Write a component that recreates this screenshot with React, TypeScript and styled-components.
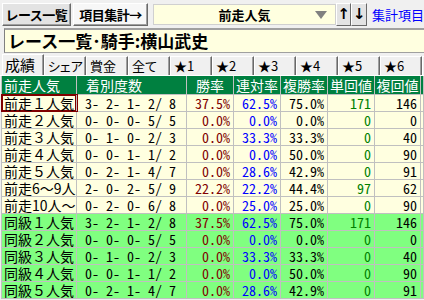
import React from "react";
import styled, { createGlobalStyle } from "styled-components";

const GlobalStyle = createGlobalStyle`
  html, body {
    margin: 0;
    padding: 0;
    background: #f0f0f0;
    overflow: hidden;
  }
  body {
    font-family: "Noto Sans CJK JP", sans-serif;
  }
`;

const Page = styled.div`
  width: 424px;
  height: 300px;
  overflow: hidden;
  background: #f0f0f0;
`;

// top tool bar
const TopBar = styled.div`
  display: flex;
  align-items: center;
  height: 28px;
  padding-left: 2px;
  white-space: nowrap;
  overflow: hidden;
`;

const ToolButton = styled.button<{ $width: number; $light?: boolean }>`
  width: ${(p) => p.$width}px;
  height: 23px;
  margin: 0 2px 0 0;
  padding: 0;
  font: bold 13px "Noto Sans CJK JP", sans-serif;
  letter-spacing: -0.5px;
  color: #000;
  background: ${(p) => (p.$light ? "#f7f7f7" : "#e3e3e3")};
  border: 1px solid;
  border-color: #ffffff #696969 #696969 #ffffff;
  box-shadow: inset -1px -1px 0 #a0a0a0;
`;

const Select = styled.div`
  position: relative;
  width: 189px;
  height: 21px;
  margin-left: 3px;
  box-sizing: border-box;
  background: #ffffe0;
  border: 1px solid #d0d0d0;
  font: bold 13px "Noto Sans CJK JP", sans-serif;
  line-height: 19px;
  text-align: center;
`;

const SelectArrow = styled.span`
  position: absolute;
  right: 8px;
  top: 6px;
  width: 0;
  height: 0;
  border-left: 6px solid transparent;
  border-right: 6px solid transparent;
  border-top: 8px solid #808080;
`;

const ArrowButton = styled.button`
  width: 16px;
  height: 23px;
  margin: 0;
  padding: 0;
  font: bold 15px "DejaVu Sans", sans-serif;
  line-height: 19px;
  background: #e3e3e3;
  border: 1px solid;
  border-color: #ffffff #696969 #696969 #ffffff;
  &:first-of-type {
    margin-left: 3px;
  }
`;

const LinkText = styled.span`
  margin-left: 5px;
  color: #0000ff;
  font-size: 13px;
`;

const TitleBox = styled.div`
  height: 25px;
  margin-left: 4px;
  box-sizing: border-box;
  background: #ffffe0;
  border-top: 2px solid #a0a0a0;
  border-left: 1px solid #808080;
  border-bottom: 1px solid #a0a0a0;
  padding-left: 3px;
  font: bold 17px "Noto Sans CJK JP", sans-serif;
  line-height: 21px;
  white-space: nowrap;
`;

// tab strip
const TabStrip = styled.div`
  display: flex;
  align-items: flex-end;
  height: 23px;
  padding-left: 2px;
  box-sizing: border-box;
  overflow: hidden;
  border-bottom: 1px solid #ffffff;
`;

const Tab = styled.div<{ $selected?: boolean }>`
  flex: none;
  width: 42px;
  height: ${(p) => (p.$selected ? 21 : 19)}px;
  box-sizing: border-box;
  border-top: 1px solid #ffffff;
  border-left: 1px solid #ffffff;
  border-right: 1px solid #696969;
  box-shadow: inset -1px 0 0 #a0a0a0;
  background: #f0f0f0;
  font-size: ${(p) => (p.$selected ? 15 : 13)}px;
  font-feature-settings: "palt";
  line-height: ${(p) => (p.$selected ? 19 : 17)}px;
  padding-left: ${(p) => (p.$selected ? 2 : 3)}px;
  white-space: nowrap;
  overflow: hidden;
`;

// result grid
const Table = styled.div`
  margin-left: 1px;
  border-left: 1px solid #c0c0c0;
  font-family: "Noto Sans CJK JP", sans-serif;
  font-size: 14px;
`;

const Row = styled.div<{ $bg: string; $header?: boolean }>`
  display: grid;
  grid-template-columns: 75px 110px 47px 47px 47px 47px 46px 1fr;
  height: ${(p) => (p.$header ? 19 : 17)}px;
  box-sizing: border-box;
  border-bottom: 1px solid #c0c0c0;
  background: ${(p) => p.$bg};
  color: ${(p) => (p.$header ? "#ffffff" : "#000000")};
  line-height: ${(p) => (p.$header ? 18 : 16)}px;
`;

const Cell = styled.div<{ $align?: string; $color?: string; $pad?: number; $mark?: boolean; $num?: boolean }>`
  position: relative;
  border-right: 1px solid #c0c0c0;
  box-sizing: border-box;
  white-space: pre;
  font-feature-settings: ${(p) => (p.$num ? '"hwid"' : "normal")};
  text-align: ${(p) => p.$align || "left"};
  color: ${(p) => p.$color || "inherit"};
  padding: ${(p) => (p.$align === "right" ? `0 ${p.$pad ?? 3}px 0 0` : `0 0 0 ${p.$pad ?? 2}px`)};
  box-shadow: ${(p) => (p.$mark ? "inset 0 0 0 1px #800000" : "none")};
  outline: ${(p) => (p.$mark ? "1px solid #800000" : "none")};
  overflow: ${(p) => (p.$mark ? "visible" : "hidden")};
`;

const HeadCell = styled.div<{ $center?: boolean; $pad?: number }>`
  border-right: 1px solid #c0c0c0;
  box-sizing: border-box;
  overflow: hidden;
  white-space: nowrap;
  text-align: ${(p) => (p.$center ? "center" : "left")};
  padding-left: ${(p) => p.$pad ?? 0}px;
`;

type Line = [string, string, string, string, string, string, string];

const rows: Line[] = [
  ["前走１人気", "3- 2- 1- 2/ 8", "37.5%", "62.5%", "75.0%", "171", "146"],
  ["前走２人気", "0- 0- 0- 5/ 5", "0.0%", "0.0%", "0.0%", "0", "0"],
  ["前走３人気", "0- 1- 0- 2/ 3", "0.0%", "33.3%", "33.3%", "0", "40"],
  ["前走４人気", "0- 0- 1- 1/ 2", "0.0%", "0.0%", "50.0%", "0", "90"],
  ["前走５人気", "0- 2- 1- 4/ 7", "0.0%", "28.6%", "42.9%", "0", "91"],
  ["前走6～9人", "2- 0- 2- 5/ 9", "22.2%", "22.2%", "44.4%", "97", "62"],
  ["前走10人～", "0- 2- 0- 6/ 8", "0.0%", "25.0%", "25.0%", "0", "90"],
  ["同級１人気", "3- 2- 1- 2/ 8", "37.5%", "62.5%", "75.0%", "171", "146"],
  ["同級２人気", "0- 0- 0- 5/ 5", "0.0%", "0.0%", "0.0%", "0", "0"],
  ["同級３人気", "0- 1- 0- 2/ 3", "0.0%", "33.3%", "33.3%", "0", "40"],
  ["同級４人気", "0- 0- 1- 1/ 2", "0.0%", "0.0%", "50.0%", "0", "90"],
  ["同級５人気", "0- 2- 1- 4/ 7", "0.0%", "28.6%", "42.9%", "0", "91"],
];

const tabs = ["成績", "シェア", "賞金", "全て", "★1", "★2", "★3", "★4", "★5", "★6", "★7"];

export default function App() {
  return (
    <Page>
      <GlobalStyle />
      <TopBar>
        <ToolButton $width={71}>レース一覧</ToolButton>
        <ToolButton $width={78} $light>項目集計→</ToolButton>
        <Select>
          前走人気
          <SelectArrow />
        </Select>
        <ArrowButton>↑</ArrowButton>
        <ArrowButton>↓</ArrowButton>
        <LinkText>集計項目</LinkText>
      </TopBar>
      <TitleBox>レース一覧･騎手:横山武史</TitleBox>
      <TabStrip>
        {tabs.map((t, i) => (
          <Tab key={t} $selected={i === 0}>
            {t}
          </Tab>
        ))}
      </TabStrip>
      <Table>
        <Row $bg="#008040" $header>
          <HeadCell $pad={2}>前走人気</HeadCell>
          <HeadCell $pad={9}>着別度数</HeadCell>
          <HeadCell $center>勝率</HeadCell>
          <HeadCell $center>連対率</HeadCell>
          <HeadCell $center>複勝率</HeadCell>
          <HeadCell $center>単回値</HeadCell>
          <HeadCell $center>複回値</HeadCell>
          <HeadCell />
        </Row>
        {rows.map((r, i) => (
          <Row key={i} $bg={i < 7 ? "#ffffe0" : "#80ff80"}>
            <Cell $mark={i === 0}>{r[0]}</Cell>
            <Cell $pad={8} $num>{r[1]}</Cell>
            <Cell $num $align="right" $color="#800000">{r[2]}</Cell>
            <Cell $num $align="right" $color="#0000ff">{r[3]}</Cell>
            <Cell $num $align="right">{r[4]}</Cell>
            <Cell $num $align="right" $color="#008000">{r[5]}</Cell>
            <Cell $num $align="right">{r[6]}</Cell>
            <Cell />
          </Row>
        ))}
      </Table>
    </Page>
  );
}
